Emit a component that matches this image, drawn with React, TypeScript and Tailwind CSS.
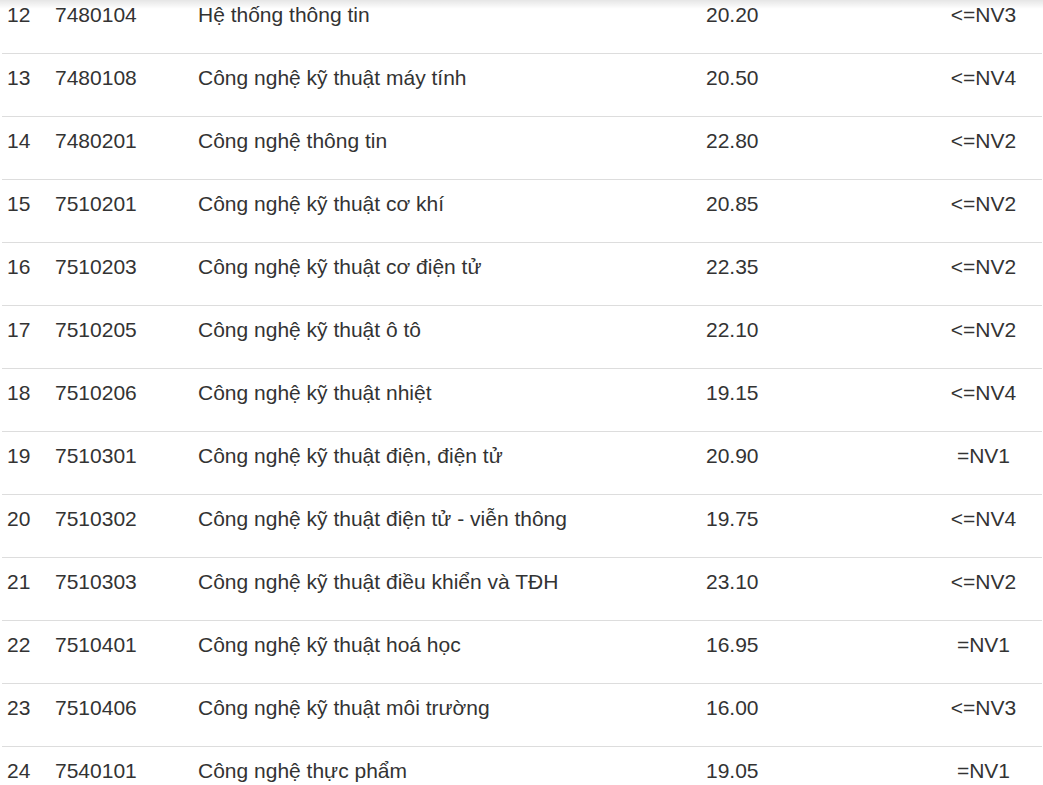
import React from "react";

const rows = [
  ["12", "7480104", "Hệ thống thông tin", "20.20", "<=NV3"],
  ["13", "7480108", "Công nghệ kỹ thuật máy tính", "20.50", "<=NV4"],
  ["14", "7480201", "Công nghệ thông tin", "22.80", "<=NV2"],
  ["15", "7510201", "Công nghệ kỹ thuật cơ khí", "20.85", "<=NV2"],
  ["16", "7510203", "Công nghệ kỹ thuật cơ điện tử", "22.35", "<=NV2"],
  ["17", "7510205", "Công nghệ kỹ thuật ô tô", "22.10", "<=NV2"],
  ["18", "7510206", "Công nghệ kỹ thuật nhiệt", "19.15", "<=NV4"],
  ["19", "7510301", "Công nghệ kỹ thuật điện, điện tử", "20.90", "=NV1"],
  ["20", "7510302", "Công nghệ kỹ thuật điện tử - viễn thông", "19.75", "<=NV4"],
  ["21", "7510303", "Công nghệ kỹ thuật điều khiển và TĐH", "23.10", "<=NV2"],
  ["22", "7510401", "Công nghệ kỹ thuật hoá học", "16.95", "=NV1"],
  ["23", "7510406", "Công nghệ kỹ thuật môi trường", "16.00", "<=NV3"],
  ["24", "7540101", "Công nghệ thực phẩm", "19.05", "=NV1"],
];

export default function App() {
  return (
    <div className="relative h-[785px] w-[1043px] overflow-hidden bg-white font-['Liberation_Sans',Arial,sans-serif] text-[21px] leading-[28px] text-[#333]">
      {/* shadow from the sticky header above */}
      <div className="pointer-events-none absolute inset-x-0 top-0 z-10 h-[9px] bg-gradient-to-b from-black/10 to-transparent" />
      <div className="-mt-[9px] ml-[2px] w-[1040px]">
        {rows.map((r) => (
          <div
            key={r[0]}
            className="grid h-[63px] grid-cols-[48px_143px_508px_244px_1fr] border-b border-[#ddd] pt-[10px]"
          >
            <div className="pl-[5px]">{r[0]}</div>
            <div className="pl-[5px]">{r[1]}</div>
            <div className="pl-[5px] whitespace-nowrap">{r[2]}</div>
            <div className="pl-[5px]">{r[3]}</div>
            <div className="pl-[5px] pr-[25px] text-center">{r[4]}</div>
          </div>
        ))}
      </div>
    </div>
  );
}
